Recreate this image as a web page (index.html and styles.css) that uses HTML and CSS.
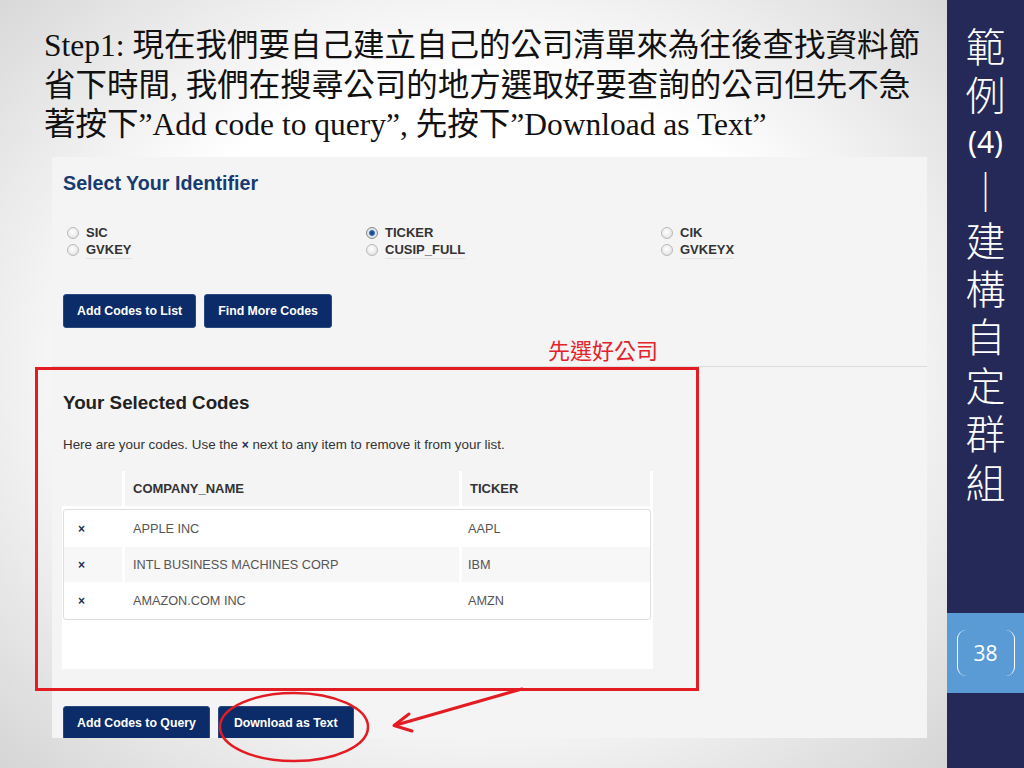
FILE: index.html
```html
<!DOCTYPE html>
<html lang="zh-Hant">
<head>
<meta charset="utf-8">
<title>範例(4) 建構自定群組</title>
<link rel="stylesheet" href="styles.css">
</head>
<body>
<div class="slide">
  <main class="main">
    <h1 class="title">Step1: 現在我們要自己建立自己的公司清單來為往後查找資料節<br>省下時間, 我們在搜尋公司的地方選取好要查詢的公司但先不急<br>著按下”Add code to query”, 先按下”Download as Text”</h1>

    <section class="panel">
      <div class="identifier">
        <h2 class="ident-title">Select Your Identifier</h2>
        <div class="radios">
          <div class="radio-col">
            <div class="radio"><span class="dot"></span><span class="lbl">SIC</span></div>
            <div class="radio"><span class="dot"></span><span class="lbl">GVKEY</span></div>
          </div>
          <div class="radio-col">
            <div class="radio"><span class="dot on"></span><span class="lbl">TICKER</span></div>
            <div class="radio"><span class="dot"></span><span class="lbl">CUSIP_FULL</span></div>
          </div>
          <div class="radio-col">
            <div class="radio"><span class="dot"></span><span class="lbl">CIK</span></div>
            <div class="radio"><span class="dot"></span><span class="lbl">GVKEYX</span></div>
          </div>
        </div>
        <div class="btns btns-top">
          <button class="btn">Add Codes to List</button>
          <button class="btn">Find More Codes</button>
        </div>
      </div>

      <div class="selected">
        <h2 class="sel-title">Your Selected Codes</h2>
        <p class="desc">Here are your codes. Use the <b class="x-inline">×</b> next to any item to remove it from your list.</p>
        <div class="table">
          <div class="thead">
            <div class="th th-x"></div>
            <div class="th th-name">COMPANY_NAME</div>
            <div class="th th-tick">TICKER</div>
          </div>
          <div class="tbody">
            <div class="tr"><div class="td td-x">×</div><div class="td td-name">APPLE INC</div><div class="td td-tick">AAPL</div></div>
            <div class="tr tr-alt"><div class="td td-x">×</div><div class="td td-name">INTL BUSINESS MACHINES CORP</div><div class="td td-tick">IBM</div></div>
            <div class="tr"><div class="td td-x">×</div><div class="td td-name">AMAZON.COM INC</div><div class="td td-tick">AMZN</div></div>
          </div>
        </div>
        <div class="btns btns-bottom">
          <button class="btn btn-lg">Add Codes to Query</button>
          <button class="btn btn-lg btn-wide">Download as Text</button>
        </div>
      </div>
    </section>

    <div class="note">先選好公司</div>
    <div class="redbox"></div>
    <svg class="marks" width="947" height="768" viewBox="0 0 947 768">
      <ellipse cx="294" cy="727" rx="74" ry="34" fill="none" stroke="#e31b23" stroke-width="2.5"/>
      <path d="M522 689 L396 725" fill="none" stroke="#e31b23" stroke-width="3" stroke-linecap="round"/>
      <path d="M409 714 L394 725.5 L412 731" fill="none" stroke="#e31b23" stroke-width="3" stroke-linecap="round" stroke-linejoin="round"/>
    </svg>
  </main>

  <aside class="side">
    <div class="side-title">
      <span class="ch">範</span>
      <span class="ch">例</span>
      <span class="ch latin">(4)</span>
      <span class="ch">｜</span>
      <span class="ch">建</span>
      <span class="ch">構</span>
      <span class="ch">自</span>
      <span class="ch">定</span>
      <span class="ch">群</span>
      <span class="ch">組</span>
    </div>
    <div class="page">
      <span class="pagenum">38</span>
    </div>
  </aside>
</div>
</body>
</html>
```

FILE: styles.css
```css
* {
  box-sizing: border-box;
  margin: 0;
  padding: 0;
}

html, body {
  width: 1024px;
  height: 768px;
  overflow: hidden;
}

body {
  font-family: "Liberation Sans", Arial, sans-serif;
  background: #ffffff;
}

.slide {
  display: flex;
  width: 1024px;
  height: 768px;
}

/* ---------- main slide area ---------- */
.main {
  position: relative;
  width: 947px;
  height: 768px;
  background: radial-gradient(ellipse farthest-corner at 50% 48%, #ffffff 52%, #d5d5d5 100%);
}

.title {
  font-family: "Liberation Serif", "Noto Sans CJK TC", serif;
  font-weight: normal;
  font-size: 31.5px;
  line-height: 39.5px;
  color: #111111;
  padding: 26px 0 0 44px;
  margin-bottom: 12.5px;
  white-space: nowrap;
}

/* ---------- captured web panel ---------- */
.panel {
  margin-left: 52px;
  width: 875px;
  height: 581px;
  background: #f4f4f4;
  overflow: hidden;
}

.identifier {
  padding: 15px 11px 38px;
  border-bottom: 1px solid #dcdcdc;
}

.ident-title {
  font-size: 19.7px;
  line-height: 22px;
  font-weight: bold;
  color: #183b6f;
}

.radios {
  display: grid;
  grid-template-columns: 299px 295px 1fr;
  margin: 30px 0 0 4px;
}

.radio-col {
  display: flex;
  flex-direction: column;
}

.radio {
  display: flex;
  align-items: center;
  height: 17px;
  gap: 7px;
}

.dot {
  width: 12px;
  height: 12px;
  border-radius: 50%;
  border: 1px solid #b9b9b9;
  background: radial-gradient(circle at 45% 40%, #ffffff 0, #ececec 55%, #d2d2d2 100%);
  flex: none;
}

.dot.on {
  border-color: #8a8a8a;
  background: radial-gradient(circle at 50% 50%, #143e78 0, #2b63a8 2.4px, #dfe6ee 3.4px, #e6e6e6 60%, #cfcfcf 100%);
}

.lbl {
  font-size: 13px;
  font-weight: bold;
  color: #333333;
  line-height: 15px;
}

.radio:last-child .lbl {
  border-bottom: 1px solid #e2e2e2;
  padding-bottom: 1px;
  margin-top: 2px;
}

.btns {
  display: flex;
  gap: 8px;
}

.btns-top {
  margin-top: 36px;
}

.btn {
  height: 34px;
  padding: 0 13px;
  background: #0c2c69;
  color: #ffffff;
  font-family: "Liberation Sans", Arial, sans-serif;
  font-size: 12.3px;
  font-weight: bold;
  border: 1px solid #2a4780;
  border-radius: 3px;
}

.btn-lg {
  font-size: 12.3px;
  padding: 0 13px;
}

.btn-wide {
  padding: 0 15px;
}

.selected {
  padding: 25px 11px 0;
}

.sel-title {
  font-size: 18.8px;
  line-height: 22px;
  font-weight: bold;
  color: #222222;
}

.desc {
  margin-top: 23px;
  font-size: 13.4px;
  line-height: 16px;
  color: #333333;
}

.x-inline {
  color: #1c2f55;
  font-size: 12px;
}

/* ---------- codes table ---------- */
.table {
  margin: 18px 0 0 -1px;
  width: 591px;
  height: 198px;
  background: #ffffff;
}

.thead {
  display: grid;
  grid-template-columns: 60px 334px 188px;
  gap: 3px;
  height: 35px;
}

.th {
  background: #f4f4f4;
  font-size: 13px;
  font-weight: bold;
  color: #333333;
  display: flex;
  align-items: center;
  padding-left: 8px;
  height: 35px;
}

.tbody {
  margin: 3px 0 0 1px;
  width: 588px;
  border: 1px solid #dedede;
  border-radius: 3px;
  overflow: hidden;
}

.tr {
  display: grid;
  grid-template-columns: 58px 334px 1fr;
  gap: 3px;
  height: 37px;
}

.tr-alt {
  height: 35px;
}

.tr-alt .td {
  background: #f7f7f7;
}

.td {
  display: flex;
  align-items: center;
  font-size: 12.7px;
  color: #555555;
}

.td-x {
  padding-left: 14px;
  font-size: 12px;
  font-weight: bold;
  color: #1c2f55;
}

.td-name {
  padding-left: 8px;
}

.td-tick {
  padding-left: 6px;
}

.btns-bottom {
  margin-top: 37px;
}

/* ---------- annotations ---------- */
.note {
  position: absolute;
  left: 548px;
  top: 336px;
  font-family: "Noto Sans CJK TC", sans-serif;
  font-size: 22px;
  line-height: 26px;
  color: #e2232b;
}

.redbox {
  position: absolute;
  left: 35px;
  top: 367px;
  width: 664px;
  height: 324px;
  border: 3px solid #e31b23;
}

.marks {
  position: absolute;
  left: 0;
  top: 0;
  pointer-events: none;
}

/* ---------- right sidebar ---------- */
.side {
  width: 77px;
  height: 768px;
  background: #242957;
  display: flex;
  flex-direction: column;
  align-items: center;
}

.side-title {
  padding-top: 21px;
  display: flex;
  flex-direction: column;
  align-items: center;
  color: #ffffff;
  font-family: "Noto Sans CJK TC", sans-serif;
  font-size: 40px;
  font-weight: 300;
  line-height: 48px;
}

.ch {
  display: block;
  height: 48.4px;
}

.ch.latin {
  font-family: "Noto Sans", "Open Sans", sans-serif;
  font-size: 30px;
  font-weight: normal;
}

.page {
  margin-top: auto;
  margin-bottom: 75px;
  width: 77px;
  height: 80px;
  background: #5b9bd5;
  display: flex;
  align-items: center;
  justify-content: center;
}

.pagenum {
  width: 58px;
  height: 46px;
  border-left: 1.5px solid #ffffff;
  border-right: 1.5px solid #ffffff;
  border-radius: 9px;
  color: #ffffff;
  font-family: "Open Sans", "Noto Sans", sans-serif;
  font-size: 21px;
  display: flex;
  align-items: center;
  justify-content: center;
}
```
